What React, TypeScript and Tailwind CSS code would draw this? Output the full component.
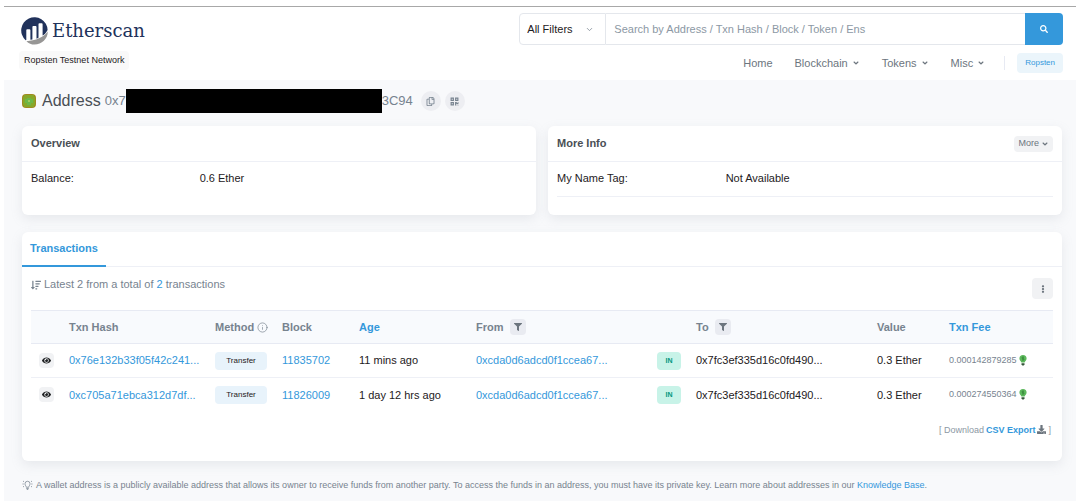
import React from "react";
import {
    FaAngleDown,
    FaDownload,
    FaEllipsisV,
    FaEye,
    FaFilter,
    FaQrcode,
    FaRegCopy,
    FaSearch,
    FaSortAmountDown,
} from "react-icons/fa";
import { ChevronDown, Info } from "lucide-react";

interface Transaction {
    hash: string;
    block: string;
    age: string;
    from: string;
    to: string;
    value: string;
    fee: string;
}

const transactions: Transaction[] = [
    {
        hash: "0x76e132b33f05f42c241...",
        block: "11835702",
        age: "11 mins ago",
        from: "0xcda0d6adcd0f1ccea67...",
        to: "0x7fc3ef335d16c0fd490...",
        value: "0.3 Ether",
        fee: "0.000142879285",
    },
    {
        hash: "0xc705a71ebca312d7df...",
        block: "11826009",
        age: "1 day 12 hrs ago",
        from: "0xcda0d6adcd0f1ccea67...",
        to: "0x7fc3ef335d16c0fd490...",
        value: "0.3 Ether",
        fee: "0.000274550364",
    },
];

const cardClass =
    "bg-white rounded-md shadow-[0_4px_12px_rgba(140,152,164,0.16)]";

const Logo: React.FC = () => (
    <a href="#" className="flex items-center gap-1 text-[#21325b]">
        <svg width="27" height="28" viewBox="0 0 27 28" aria-hidden="true">
            <path
                d="M4.6 23.2A13.2 13.2 0 1 1 26.6 13C25.4 15.6 23.2 17.6 21.6 18.6V7.2q0-.9-.9-.9h-2.3q-.9 0-.9.9v13.6l-2 .9V9.9q0-.9-.9-.9h-2.3q-.9 0-.9.9v12.5l-2 .4V13.2q0-.9-.9-.9H6.2q-.9 0-.9.9v9.9z"
                fill="#21325b"
            />
            <path
                d="M5.4 24.2C14.5 23.8 22.6 20.4 26.8 14.6 26.8 22 20.8 27.6 13.5 27.6c-3 0-5.900-1.200-8.100-3.400z"
                fill="#979695"
            />
        </svg>
        <span className="font-['DejaVu_Serif',serif] text-[18px] leading-7">
            Etherscan
        </span>
    </a>
);

const Identicon: React.FC = () => (
    <svg
        width="14"
        height="14"
        viewBox="0 0 14 14"
        className="rounded-sm"
        aria-hidden="true"
    >
        <rect width="14" height="14" fill="#a08a1e" />
        <path d="M2 1h10v2h1v8h-1v2H2v-2H1V3h1z" fill="#86a82a" />
        <path d="M5 4h4v1h2v4H9v2H5V9H3V5h2z" fill="#6cb848" />
        <path d="M6 6h2v2H6z" fill="#a5c95a" />
    </svg>
);

const GasBulb: React.FC = () => (
    <svg width="8" height="11" viewBox="0 0 8 11" aria-hidden="true">
        <path
            d="M4 0a3.600 3.600 0 0 1 3.600 3.500C7.600 5.400 6 6 5.600 7.500H2.400C2 6 .4 5.400.4 3.500A3.600 3.600 0 0 1 4 0z"
            fill="#5cb85c"
        />
        <path
            d="M5 2.200H3.700q-.8 0-.8.7t.8.700h.6q.8 0 .8.700t-.8.700H3M4 1.500v4"
            fill="none"
            stroke="#2f7d34"
            strokeWidth=".6"
        />
        <path d="M2.500 8.200h3v1.200L4.700 10.600H3.300L2.500 9.400z" fill="#35573a" />
    </svg>
);

const TipBulb: React.FC = () => (
    <svg
        width="11"
        height="10"
        viewBox="0 0 22 20"
        fill="none"
        stroke="currentColor"
        strokeWidth="1.500"
        className="shrink-0"
        aria-hidden="true"
    >
        <path d="M8.500 14.500C8.500 12 6 11 6 7.500a5 5 0 0 1 10 0c0 3.500-2.500 4.500-2.500 7zM8.500 17h5M9.500 19h3" />
        <path d="M1 8h2.500M18.500 8H21M2 2l2 1.500M20 2l-2 1.500M2 14l2-1.500M20 14l-2-1.500" />
    </svg>
);

const Header: React.FC = () => (
    <header className="flex h-[74px] border-t border-[#a8a8a8] bg-white pl-[17px] pr-[13px]">
        <div className="flex flex-[11] flex-col items-start pt-[10px]">
            <Logo />
            <span className="mt-[6px] -ml-[2px] rounded-sm bg-[#f9f9f9] px-[5px] text-[9px] leading-[19px] text-[#1e2022]">
                Ropsten Testnet Network
            </span>
        </div>

        <div className="flex flex-[12] flex-col pt-[6px]">
            {/* Search */}
            <form className="flex h-8 text-[11px]">
                <label className="relative flex w-[87px] items-center rounded-l border border-[#e4e7ec]">
                    <select
                        aria-label="Filter"
                        className="h-full w-full appearance-none bg-transparent pl-[7px] text-[#1e2022] outline-none"
                    >
                        <option>All Filters</option>
                    </select>
                    <ChevronDown
                        size={9}
                        className="pointer-events-none absolute right-[11px] text-[#77838f]"
                    />
                </label>
                <input
                    type="text"
                    aria-label="Search"
                    placeholder="Search by Address / Txn Hash / Block / Token / Ens"
                    className="min-w-0 flex-1 border-y border-[#e4e7ec] px-2 outline-none placeholder:text-[#8c98a4]"
                />
                <button
                    type="button"
                    aria-label="Search"
                    className="flex w-[38px] items-center justify-center rounded-r bg-[#3498db] text-white"
                >
                    <FaSearch size={8} />
                </button>
            </form>

            {/* Navigation */}
            <nav className="mt-2 flex h-5 items-center justify-end gap-[22px] text-[11px] text-[#6c757e]">
                <a href="#">Home</a>
                {["Blockchain", "Tokens", "Misc"].map((item) => (
                    <a key={item} href="#" className="flex items-center gap-1">
                        {item}
                        <FaAngleDown size={8} />
                    </a>
                ))}
                <div className="-ml-[3px] flex items-center gap-3">
                    <span className="h-[14px] w-px bg-[#e7eaf3]" />
                    <button className="h-5 rounded-sm bg-[#ebf5fb] px-2 text-[8px] text-[#3498db]">
                        Ropsten
                    </button>
                </div>
            </nav>
        </div>
    </header>
);

const FilterButton: React.FC<{ label: string }> = ({ label }) => (
    <button
        aria-label={label}
        className="flex size-4 items-center justify-center rounded-sm bg-[#e9ebf1] text-[#6c757e]"
    >
        <FaFilter size={8} />
    </button>
);

const TransactionTable: React.FC = () => (
    <table className="w-full table-fixed border-collapse text-left text-[11px] text-[#1e2022]">
        <colgroup>
            <col className="w-[38px]" />
            <col className="w-[146px]" />
            <col className="w-[67px]" />
            <col className="w-[77px]" />
            <col className="w-[117px]" />
            <col className="w-[181px]" />
            <col className="w-[39px]" />
            <col className="w-[181px]" />
            <col className="w-[72px]" />
            <col className="w-[104px]" />
        </colgroup>
        <thead>
            <tr className="h-[33px] border-y border-[#e7eaf3] bg-[#f8fafd] text-[#77838f]">
                <th />
                <th>Txn Hash</th>
                <th>
                    <span className="flex items-center gap-[3px]">
                        Method <Info size={11} strokeWidth={1.5} />
                    </span>
                </th>
                <th>Block</th>
                <th>
                    <a href="#" className="text-[#3498db]">
                        Age
                    </a>
                </th>
                <th>
                    <span className="flex items-center gap-[6px]">
                        From <FilterButton label="Filter by sender" />
                    </span>
                </th>
                <th />
                <th>
                    <span className="flex items-center gap-[6px]">
                        To <FilterButton label="Filter by recipient" />
                    </span>
                </th>
                <th>Value</th>
                <th>
                    <a href="#" className="text-[#3498db]">
                        Txn Fee
                    </a>
                </th>
            </tr>
        </thead>
        <tbody>
            {transactions.map((txn) => (
                <tr
                    key={txn.hash}
                    className="h-[34px] border-b border-[#eef0f6] last:border-0"
                >
                    <td className="pl-2">
                        <button
                            aria-label="Preview transaction"
                            className="flex size-[15px] items-center justify-center rounded-sm bg-[#f1f2f4]"
                        >
                            <FaEye size={9} />
                        </button>
                    </td>
                    <td>
                        <a href="#" className="text-[#3498db]">
                            {txn.hash}
                        </a>
                    </td>
                    <td>
                        <span className="block w-[52px] rounded-sm bg-[#e8f3fb] text-center text-[8px] leading-[18px]">
                            Transfer
                        </span>
                    </td>
                    <td>
                        <a href="#" className="text-[#3498db]">
                            {txn.block}
                        </a>
                    </td>
                    <td>{txn.age}</td>
                    <td>
                        <a href="#" className="text-[#3498db]">
                            {txn.from}
                        </a>
                    </td>
                    <td>
                        <span className="block w-6 rounded-sm bg-[#c8f3e8] text-center text-[7px] font-bold leading-[18px] text-[#02977e]">
                            IN
                        </span>
                    </td>
                    <td>{txn.to}</td>
                    <td>{txn.value}</td>
                    <td>
                        <span className="flex items-center gap-[2px] text-[9px] text-[#77838f]">
                            {txn.fee}
                            <GasBulb />
                        </span>
                    </td>
                </tr>
            ))}
        </tbody>
    </table>
);

const App: React.FC = () => {
    return (
        <div className="bg-white px-1 pt-[6px] font-['Liberation_Sans',Arial,sans-serif] text-[#1e2022]">
            <Header />

            <main className="bg-[#f8f9fb] pl-[18px] pr-[14px] pb-2">
                {/* Address */}
                <div className="flex h-[46px] items-center pb-1">
                    <Identicon />
                    <h1 className="ml-[6px] text-base text-[#4a4f55]">
                        Address
                    </h1>
                    <span className="ml-1 text-[13px] text-[#77838f]">
                        0x7
                    </span>
                    <span className="h-6 w-64 bg-black" />
                    <span className="text-[13px] text-[#77838f]">3C94</span>
                    <button
                        aria-label="Copy address"
                        className="ml-2 flex size-5 items-center justify-center rounded-full bg-[#edeef2] text-[#77838f]"
                    >
                        <FaRegCopy size={9} />
                    </button>
                    <button
                        aria-label="Show QR code"
                        className="ml-1 flex size-5 items-center justify-center rounded-full bg-[#edeef2] text-[#77838f]"
                    >
                        <FaQrcode size={9} />
                    </button>
                </div>

                {/* Summary cards */}
                <div className="grid grid-cols-2 gap-3 text-[11px]">
                    <section className={cardClass}>
                        <h2 className="flex h-9 items-center border-b border-[#eef0f6] px-[9px] font-bold text-[#4a4f55]">
                            Overview
                        </h2>
                        <div className="flex h-[53px] px-[9px] pt-2">
                            <span className="w-[34%]">Balance:</span>
                            <span>0.6 Ether</span>
                        </div>
                    </section>
                    <section className={cardClass}>
                        <div className="flex h-9 items-center justify-between border-b border-[#eef0f6] px-[9px]">
                            <h2 className="font-bold text-[#4a4f55]">
                                More Info
                            </h2>
                            <button className="flex h-4 items-center gap-[2px] rounded-sm bg-[#f1f2f4] px-1 text-[9px] text-[#6c757e]">
                                More <FaAngleDown size={8} />
                            </button>
                        </div>
                        <div className="mx-[9px] flex h-[35px] border-b border-[#eef0f6] pt-2">
                            <span className="w-[34%]">My Name Tag:</span>
                            <span>Not Available</span>
                        </div>
                    </section>
                </div>

                {/* Transactions */}
                <section className={`${cardClass} mt-[17px] pb-[23px]`}>
                    <div className="flex h-[35px] border-b border-[#eef0f6] text-[11px]">
                        <button className="-mb-px h-[35px] border-b-2 border-[#3498db] px-2 font-bold text-[#3498db]">
                            Transactions
                        </button>
                    </div>
                    <div className="px-[9px]">
                        <div className="flex h-[43px] items-center justify-between">
                            <p className="flex items-center gap-[3px] pb-2 text-[11px] text-[#77838f]">
                                <FaSortAmountDown size={10} />
                                <span>
                                    Latest 2 from a total of{" "}
                                    <a href="#" className="text-[#3498db]">
                                        2
                                    </a>{" "}
                                    transactions
                                </span>
                            </p>
                            <button
                                aria-label="More options"
                                className="flex size-[21px] items-center justify-center rounded-sm bg-[#f1f2f4] text-[#6c757e]"
                            >
                                <FaEllipsisV size={8} />
                            </button>
                        </div>
                        <TransactionTable />
                        <p className="mt-[10px] flex items-center justify-end gap-[2px] pr-[2px] text-[9px] leading-4 text-[#8c98a4]">
                            [ Download{" "}
                            <a href="#" className="font-bold text-[#3498db]">
                                CSV Export
                            </a>
                            <FaDownload size={9} className="text-[#6c757e]" /> ]
                        </p>
                    </div>
                </section>

                {/* Footnote */}
                <p className="mt-4 flex items-center gap-[3px] text-[9px] leading-4 text-[#77838f]">
                    <TipBulb />
                    <span>
                        A wallet address is a publicly available address that
                        allows its owner to receive funds from another party. To
                        access the funds in an address, you must have its
                        private key. Learn more about addresses in our{" "}
                        <a href="#" className="text-[#3498db]">
                            Knowledge Base
                        </a>
                        .
                    </span>
                </p>
            </main>
        </div>
    );
};

export default App;
